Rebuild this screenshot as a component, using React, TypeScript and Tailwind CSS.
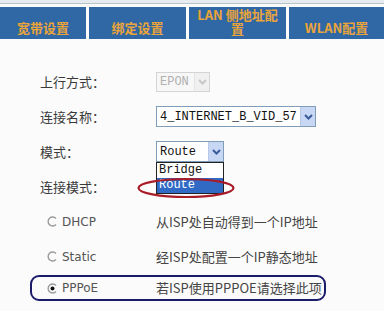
import React from 'react';

const tabs = ['宽带设置', '绑定设置', 'LAN 侧地址配置', 'WLAN配置'];

const cjk = { fontFamily: '"Noto Sans CJK SC", "DejaVu Sans", sans-serif' };
const latin = { fontFamily: '"DejaVu Sans", "Noto Sans CJK SC", sans-serif' };
const mono = { fontFamily: '"Liberation Mono", "Noto Sans CJK SC", monospace' };

const Arrow = ({ disabled }: { disabled?: boolean }) => (
  <span
    className={
      'flex h-full w-[15px] items-center justify-center border-l ' +
      (disabled ? 'border-[#e4e4e4] bg-[#f0f0f0]' : 'border-[#b8c8e8] bg-[#c8d8f4]')
    }
  >
    <svg width="9" height="6" viewBox="0 0 9 6">
      <path
        d="M1 1 L4.5 4.5 L8 1"
        fill="none"
        stroke={disabled ? '#c8c8c8' : '#3a5a9a'}
        strokeWidth="2"
      />
    </svg>
  </span>
);

const Label = ({ children }: { children: React.ReactNode }) => (
  <div className="w-[116px] text-[13px] text-[#3a3a3a]" style={cjk}>
    {children}
  </div>
);

const Radio = ({ checked }: { checked?: boolean }) => (
  <svg width="11" height="11" viewBox="0 0 11 11">
    <path d="M9 2.5 A4.5 4.5 0 1 0 9 8.5" fill="none" stroke="#9a9a9a" strokeWidth="1.4" />
    {checked && <circle cx="5.5" cy="5.5" r="2" fill="#111" />}
  </svg>
);

const modes = [
  { name: 'DHCP', desc: '从ISP处自动得到一个IP地址' },
  { name: 'Static', desc: '经ISP处配置一个IP静态地址' },
  { name: 'PPPoE', desc: '若ISP使用PPPOE请选择此项', checked: true },
];

export default function App() {
  return (
    <div className="relative h-[311px] w-[384px] overflow-hidden bg-[#fbfbfb]">
      <div className="h-[4px] border-b border-[#b9c3cc] bg-[#e6ebef]" />
      <div className="mt-[3px] grid h-[32px] grid-cols-[86px_97px_97px_95px] gap-x-[3px]">
        {tabs.map((t, i) => (
          <div
            key={t}
            className={
              'flex justify-center bg-[#2f68a4] px-1 text-center text-[13px] font-bold leading-[14px] text-[#eba43a] ' +
              (i === 2 ? 'items-start pt-[1px]' : 'items-end pb-[4px]')
            }
            style={cjk}
          >
            {t}
          </div>
        ))}
      </div>

      <div className="mt-[25px] pl-[40px]">
        <div className="flex h-[35px] items-center">
          <Label>上行方式：</Label>
          <div className="flex h-[20px] w-[54px] items-center border border-[#d4d4d4] bg-[#f7f7f7]">
            <span className="flex-1 pl-[3px] text-[12px] text-[#b0b0b0]" style={mono}>
              EPON
            </span>
            <Arrow disabled />
          </div>
        </div>
        <div className="flex h-[35px] items-center">
          <Label>连接名称：</Label>
          <div className="flex h-[21px] w-[160px] items-center border border-[#7f9db9] bg-white">
            <span className="flex-1 pl-[3px] text-[12px] text-[#111]" style={mono}>
              4_INTERNET_B_VID_57
            </span>
            <Arrow />
          </div>
        </div>
        <div className="flex h-[35px] items-center">
          <Label>模式：</Label>
          <div className="relative flex h-[21px] w-[68px] items-center border border-[#7f9db9] bg-white">
            <span className="flex-1 pl-[3px] text-[12px] text-[#111]" style={mono}>
              Route
            </span>
            <Arrow />
            <div className="absolute left-[-1px] top-[20px] w-[68px] border border-[#222] bg-white text-[12px] leading-[15px]" style={mono}>
              <div className="pl-[2px] text-[#111]">Bridge</div>
              <div className="bg-[#316ac5] pl-[2px] text-white">Route</div>
            </div>
          </div>
        </div>
        <div className="flex h-[35px] items-center">
          <Label>连接模式：</Label>
        </div>
      </div>

      <svg className="absolute left-[136px] top-[177px]" width="100" height="22" viewBox="0 0 100 22">
        <ellipse cx="50" cy="11" rx="47.5" ry="9" fill="none" stroke="#a81c28" strokeWidth="2.2" />
      </svg>

      <div className="ml-[30px] w-[296px]">
        {modes.map((m) => (
          <div
            key={m.name}
            className={
              'flex items-center rounded-[9px] border-2 pl-[15px] ' +
              (m.checked ? 'mt-[1px] h-[26px] border-[#1c1a6a]' : 'h-[35px] border-transparent')
            }
          >
            <div className="flex w-[109px] items-center gap-[4px]">
              <Radio checked={m.checked} />
              <span className="text-[12px] text-[#555]" style={latin}>
                {m.name}
              </span>
            </div>
            <span className="text-[13px] text-[#444]" style={cjk}>
              {m.desc}
            </span>
          </div>
        ))}
      </div>
    </div>
  );
}
